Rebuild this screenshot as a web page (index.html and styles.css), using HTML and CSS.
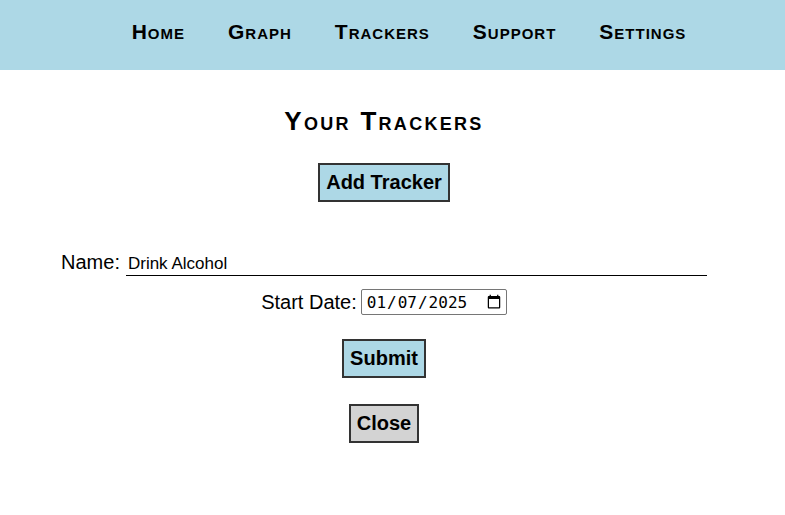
FILE: index.html
```html
<!DOCTYPE html>
<html>
<head>
<meta charset="utf-8">
<link rel="stylesheet" href="styles.css">
</head>
<body>
<header class="topbar">
  <nav class="nav">
    <a class="nav-link" href="#">Home</a>
    <a class="nav-link" href="#">Graph</a>
    <a class="nav-link" href="#">Trackers</a>
    <a class="nav-link" href="#">Support</a>
    <a class="nav-link" href="#">Settings</a>
  </nav>
</header>
<main class="content">
  <h2 class="title">Your Trackers</h2>
  <button class="btn btn-blue btn-add">Add Tracker</button>
  <form class="form">
    <div class="row row-name">
      <label class="label">Name:</label>
      <input class="name-input" type="text" value="Drink Alcohol">
    </div>
    <div class="row row-date">
      <label class="label">Start Date:</label>
      <input class="date-input" type="date" value="2025-01-07">
    </div>
    <button type="button" class="btn btn-blue btn-submit">Submit</button>
    <button type="button" class="btn btn-gray btn-close">Close</button>
  </form>
</main>
</body>
</html>
```
FILE: styles.css
```css
html, body {
  margin: 0;
  padding: 0;
  background: #fff;
  font-family: "Liberation Sans", Arial, sans-serif;
}
.topbar {
  background: #add8e6;
  height: 70px;
  display: flex;
  align-items: center;
  padding-bottom: 6px;
  box-sizing: border-box;
}
.nav {
  width: 768px;
  padding-left: 50px;
  box-sizing: border-box;
  display: flex;
  justify-content: center;
  gap: 43px;
}
.nav-link {
  color: #000;
  text-decoration: none;
  font-weight: bold;
  font-size: 21px;
  font-variant: small-caps;
  letter-spacing: 1px;
}
.content {
  width: 768px;
  display: flex;
  flex-direction: column;
  align-items: center;
}
.title {
  margin: 36px 0 0;
  font-size: 26px;
  font-weight: bold;
  font-variant: small-caps;
  letter-spacing: 2.3px;
  line-height: 30px;
}
.btn {
  font-family: "Liberation Sans", Arial, sans-serif;
  font-weight: bold;
  font-size: 20px;
  color: #000;
  border: 2px solid #333;
  border-radius: 0;
  padding: 6px 6px;
  line-height: 23px;
}
.btn-blue { background: #add8e6; }
.btn-gray { background: #d3d3d3; }
.btn-add { margin-top: 27px; }
.form {
  margin-top: 48px;
  display: flex;
  flex-direction: column;
  align-items: center;
}
.row {
  display: flex;
  gap: 6px;
}
.row-name {
  align-items: baseline;
}
.label {
  font-size: 20px;
  line-height: 24px;
}
.name-input {
  width: 581px;
  box-sizing: border-box;
  border: none;
  border-bottom: 1px solid #000;
  font-family: "Liberation Sans", Arial, sans-serif;
  font-size: 17px;
  padding: 4px 2px 1px;
  outline: none;
}
.row-date {
  margin-top: 13px;
  align-items: center;
  gap: 4px;
}
.date-input {
  font-size: 16px;
  width: 146px;
  height: 26px;
  box-sizing: border-box;
  border: 1px solid #767676;
  border-radius: 2px;
  padding: 1px 2px 1px 4px;
  font-family: "DejaVu Sans Mono", monospace;
}
.btn-submit { margin-top: 24px; }
.btn-close { margin-top: 26px; }
```
